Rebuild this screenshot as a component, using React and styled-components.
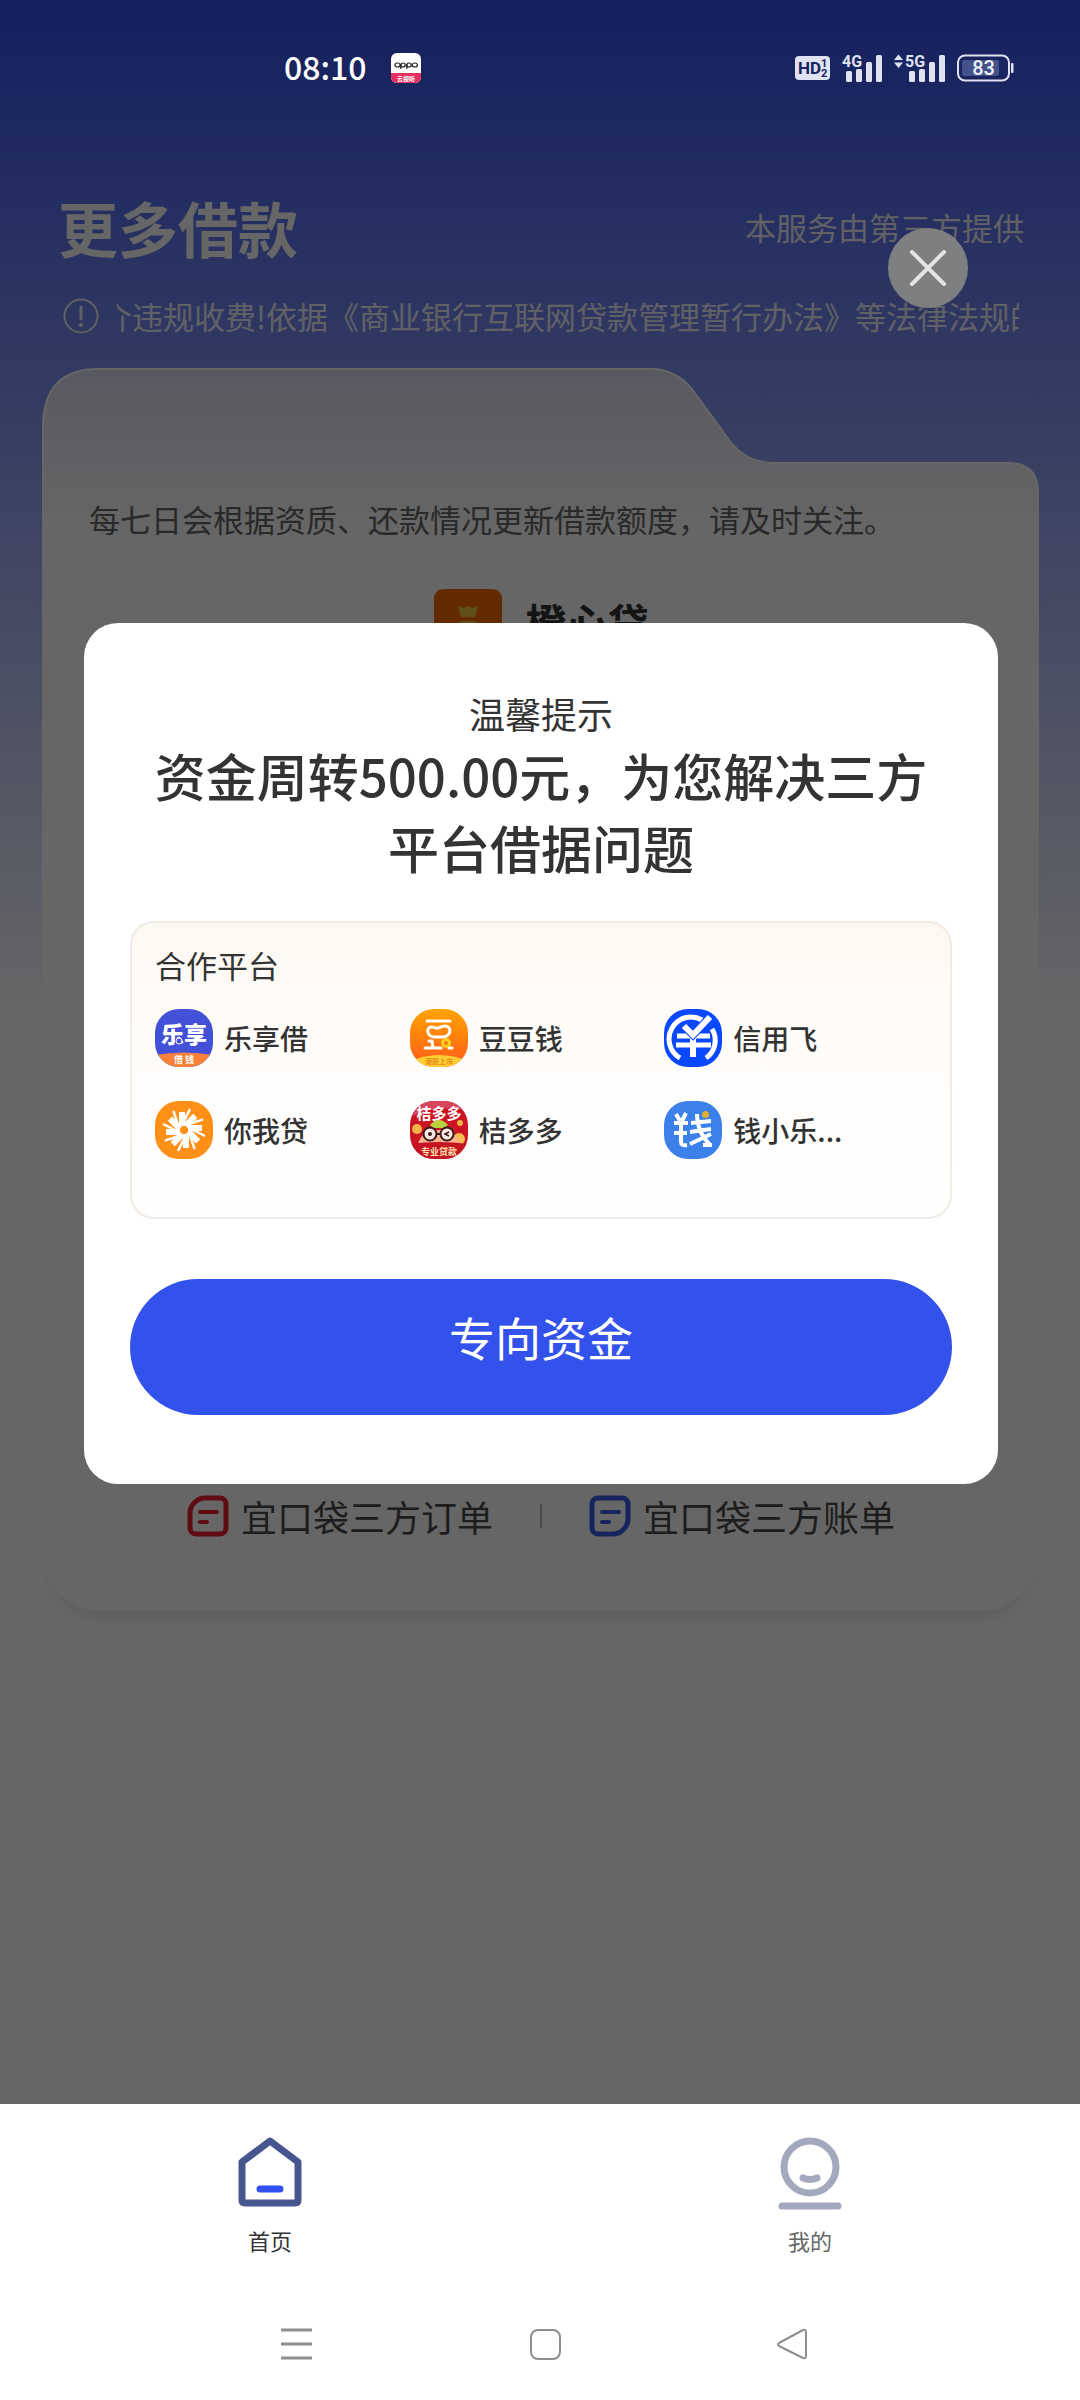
import React from 'react';
import styled, { createGlobalStyle } from 'styled-components';

const GlobalStyle = createGlobalStyle`
  * {
    box-sizing: border-box;
  }

  body {
    margin: 0;
    background: #fff;
    color: #333;
    font-family: 'Noto Sans CJK SC', 'Noto Sans', sans-serif;
  }

  h1, h2, h3, p, ul {
    margin: 0;
    padding: 0;
  }

  button {
    border: 0;
    padding: 0;
    background: none;
    color: inherit;
    font-family: inherit;
    cursor: pointer;
  }

  a {
    color: inherit;
    text-decoration: none;
  }

  svg {
    display: block;
    flex-shrink: 0;
    overflow: visible;
  }
`;

const Screen = styled.div`
  position: relative;
  display: flex;
  flex-direction: column;
  min-height: 100vh;
`;

const Page = styled.main`
  flex: 1;
  padding: 136px 41px 0 42px;
  background: linear-gradient(to bottom, #3250ee 0, #fff 1010px);
`;

const StatusBar = styled.header`
  position: absolute;
  z-index: 3;
  top: 0;
  left: 0;
  right: 0;
  display: flex;
  align-items: center;
  justify-content: space-between;
  height: 136px;
  padding: 0 66px 0 284px;
  color: #fff;
`;

const StatusGroup = styled.div`
  display: flex;
  align-items: center;
  gap: ${(props) => props.$gap}px;
`;

const Clock = styled.time`
  padding-bottom: 4px;
  font-size: 32px;
  font-weight: 500;
  line-height: 40px;
`;

const TitleRow = styled.div`
  display: flex;
  align-items: center;
  justify-content: space-between;
  height: 142px;
  padding: 40px 15px 0 16px;
`;

const PageTitle = styled.h1`
  color: #fff;
  font-size: 60px;
  font-weight: 700;
  line-height: 72px;
`;

const Provider = styled.p`
  color: #fff;
  opacity: 0.9;
  font-size: 31px;
  line-height: 40px;
`;

const Notice = styled.div`
  display: flex;
  align-items: center;
  gap: 18px;
  height: 56px;
  padding: 19px 20px 0 21px;
  margin-bottom: 34px;
  border-radius: 12px;
  color: #fff;
`;

const NoticeText = styled.p`
  flex: 1;
  min-width: 0;
  overflow: hidden;
  opacity: 0.9;
  font-size: 31px;
  line-height: 40px;
  text-indent: -16px;
  white-space: nowrap;
`;

const Card = styled.section`
  position: relative;
  display: flex;
  flex-direction: column;
  min-height: 1243px;
  border-radius: 60px 0 60px 60px;
  box-shadow: 0 16px 16px -10px rgba(0, 0, 0, 0.1);
`;

const CardShape = styled.svg`
  position: absolute;
  top: 0;
  left: 0;
  width: 100%;
  height: 160px;
`;

const CardBody = styled.div`
  position: relative;
  flex: 1;
  display: flex;
  flex-direction: column;
  justify-content: space-between;
  margin-top: 131px;
  padding: 0 46px 74px 47px;
  border-radius: 0 0 60px 60px;
  background: linear-gradient(to bottom, transparent 28px, #fff 28px);
`;

const CardHint = styled.p`
  color: #666;
  font-size: 31px;
  line-height: 40px;
`;

const Product = styled.div`
  display: flex;
  align-items: center;
  justify-content: center;
  gap: 24px;
  margin-top: 50px;
`;

const ProductName = styled.h2`
  padding-bottom: 4px;
  font-size: 41px;
  font-weight: 700;
  line-height: 60px;
`;

const Links = styled.nav`
  display: flex;
  align-items: center;
  justify-content: center;
`;

const CardLink = styled.a`
  display: flex;
  align-items: center;
  gap: 12px;
  color: #4a4a4a;
  font-size: 36px;
  line-height: 40px;
`;

const Divider = styled.i`
  width: 2px;
  height: 24px;
  margin: 0 47px;
  background: #bbb;
`;

const Overlay = styled.div`
  position: absolute;
  z-index: 2;
  top: 0;
  left: 0;
  right: 0;
  bottom: 296px;
  padding: 228px 82px 0 84px;
  background: rgba(0, 0, 0, 0.6);
`;

const CloseButton = styled.button`
  display: flex;
  align-items: center;
  justify-content: center;
  width: 80px;
  height: 80px;
  margin: 0 30px 315px auto;
  border-radius: 50%;
  background: #7e7f80;
`;

const Dialog = styled.section`
  padding: 70px 46px 69px;
  border-radius: 34px;
  background: #fff;
`;

const DialogHint = styled.p`
  margin-bottom: 6px;
  font-size: 36px;
  line-height: 40px;
  text-align: center;
`;

const DialogTitle = styled.h2`
  padding: 0 20px;
  margin-bottom: 38px;
  font-size: 51px;
  font-weight: 500;
  line-height: 72px;
  text-align: center;
`;

const Partners = styled.div`
  min-height: 298px;
  padding: 22px 31px 22px 23px;
  margin-bottom: 60px;
  border: 2px solid #f1ebe6;
  border-radius: 24px;
  background: linear-gradient(to bottom, #fef8f2, #fffdfb 50%, #fff);
`;

const PartnersTitle = styled.h3`
  margin-bottom: 24px;
  font-size: 31px;
  font-weight: 400;
  line-height: 40px;
`;

const PartnerList = styled.ul`
  display: grid;
  grid-template-columns: repeat(3, 1fr);
  row-gap: 34px;
  list-style: none;
`;

const Partner = styled.li`
  display: flex;
  align-items: center;
  gap: 11px;
  font-size: 28px;
  font-weight: 500;
  line-height: 40px;
`;

const SubmitButton = styled.button`
  display: block;
  width: 100%;
  height: 136px;
  padding-bottom: 22px;
  border-radius: 68px;
  background: #3351eb;
  color: #fff;
  font-size: 46px;
  line-height: 60px;
`;

const TabBar = styled.nav`
  display: grid;
  grid-template-columns: 1fr 1fr;
  height: 184px;
  padding-top: 32px;
  background: #fff;
`;

const Tab = styled.a`
  display: flex;
  flex-direction: column;
  align-items: center;
  gap: 12px;
  color: ${(props) => (props.$active ? '#333' : '#666')};
  font-size: 22px;
  line-height: 32px;
`;

const SystemBar = styled.footer`
  display: flex;
  justify-content: space-between;
  height: 112px;
  padding: 38px 270px 0 278px;
  background: #fff;
`;

const SystemButton = styled.button`
  width: 36px;
  height: 36px;
`;

const svgFont = "'Noto Sans CJK SC', sans-serif";
const statusFont = "'Roboto', sans-serif";

const BrandIcon = () => (
  <svg width="30" height="30" viewBox="0 0 30 30">
    <defs>
      <clipPath id="brand">
        <rect width="30" height="30" rx="6" />
      </clipPath>
    </defs>
    <g clipPath="url(#brand)">
      <rect width="30" height="30" fill="#fff" />
      <rect y="20" width="30" height="10" fill="#e4305f" />
      <g fill="none" stroke="#222" strokeWidth="1.2">
        <ellipse cx="6.5" cy="12" rx="2.6" ry="2" />
        <ellipse cx="12" cy="12" rx="2.2" ry="2" />
        <ellipse cx="18" cy="12" rx="2.2" ry="2" />
        <ellipse cx="23.8" cy="12" rx="2.6" ry="2" />
        <path d="M9.8 11v5M15.8 11v5" />
      </g>
      <text x="15" y="27.5" fontSize="6" fontWeight="700" fill="#fff" textAnchor="middle" fontFamily={svgFont}>
        云视听
      </text>
    </g>
  </svg>
);

const HdIcon = () => (
  <svg width="35" height="26" viewBox="0 0 35 26" fill="#17225f" fontFamily={statusFont} fontWeight="700">
    <rect y="1" width="35" height="24" rx="4" fill="#dfe2f0" />
    <text x="3" y="19" fontSize="17">
      HD
    </text>
    <text x="26" y="12" fontSize="11">
      1
    </text>
    <text x="26" y="22" fontSize="11">
      2
    </text>
  </svg>
);

const SignalIcon = ({ label, arrows }) => (
  <svg width={arrows ? 51 : 40} height="30" viewBox={arrows ? '-11 0 51 30' : '0 0 40 30'} fill="#dfe2f0">
    {arrows && <path d="M-11 7l4.5-5.5L-2 7zM-11 9.5l4.5 5.5L-2 9.5z" />}
    <text x="0" y="14" fontSize="16" fontWeight="700" fontFamily={statusFont}>
      {label}
    </text>
    <rect x="4" y="18" width="6" height="11" rx="1.5" />
    <rect x="14" y="16" width="6" height="13" rx="1.5" />
    <rect x="24" y="9" width="6" height="20" rx="1.5" />
    <rect x="34" y="2" width="6" height="27" rx="1.5" />
  </svg>
);

const BatteryIcon = () => (
  <svg width="57" height="28" viewBox="0 0 57 28">
    <rect x="1" y="1.5" width="51" height="25" rx="7" fill="none" stroke="#dfe2f0" strokeWidth="2" />
    <rect x="5" y="6" width="37" height="16" rx="2" fill="#44528c" />
    <rect x="54" y="9" width="2.5" height="10" rx="1" fill="#dfe2f0" />
    <text x="26.5" y="21" fontSize="20" fontWeight="500" fill="#eef0f8" textAnchor="middle" fontFamily={statusFont}>
      83
    </text>
  </svg>
);

const WarnIcon = () => (
  <svg width="36" height="36" viewBox="0 0 36 36" fill="none" stroke="#fff" opacity="0.9">
    <circle cx="18" cy="18" r="16.5" strokeWidth="2" />
    <path d="M18 9v12" strokeWidth="3" strokeLinecap="round" />
    <circle cx="18" cy="27" r="1" strokeWidth="2" />
  </svg>
);

const MoneyBagIcon = () => (
  <svg width="68" height="68" viewBox="0 0 68 68">
    <rect width="68" height="68" rx="9" fill="#fa6a00" />
    <path d="M24 17l6 2 4-2 4 2 6-2-3 11H27zM27 32h14c8 5 12 11 9 20-2 7-8 8-16 8s-14-1-16-8c-3-9 1-15 9-20z" fill="#efc540" />
    <path d="M34 54l-8-8c-2-5 5-7 8-3 3-4 10-2 8 3z" fill="#fa6a00" />
  </svg>
);

const OrderIcon = ({ color, flip }) => (
  <svg width="42" height="42" viewBox="0 0 42 42" fill="none" stroke={color} strokeWidth="5" strokeLinejoin="round">
    <path
      d={
        flip
          ? 'M9 3h24a6 6 0 0 1 6 6v15c0 8-7 15-15 15H9a6 6 0 0 1-6-6V9a6 6 0 0 1 6-6z'
          : 'M18 3h15a6 6 0 0 1 6 6v24a6 6 0 0 1-6 6H9a6 6 0 0 1-6-6V18C3 10 10 3 18 3z'
      }
    />
    <path d="M13 17h17M13 27h7" strokeWidth="4" strokeLinecap="round" />
  </svg>
);

const CloseIcon = () => (
  <svg width="40" height="40" viewBox="0 0 40 40" stroke="#e4e4e6" strokeWidth="4" strokeLinecap="round">
    <path d="M4 4l32 32M36 4L4 36" />
  </svg>
);

const Logo = ({ id, children }) => (
  <svg width="58" height="58" viewBox="0 0 58 58" fontFamily={svgFont}>
    <defs>
      <clipPath id={id}>
        <rect width="58" height="58" rx="24" />
      </clipPath>
      <linearGradient id={`${id}-fill`} x2="0" y2="1">
        <stop stopColor="#ffa400" />
        <stop offset="1" stopColor="#ff5a1a" />
      </linearGradient>
    </defs>
    <g clipPath={`url(#${id})`}>{children}</g>
  </svg>
);

const LexiangLogo = () => (
  <Logo id="lexiang">
    <rect width="58" height="58" fill="#4350d8" />
    <text x="29" y="34" fontSize="23" fontWeight="900" fill="#fff" textAnchor="middle">
      乐享
    </text>
    <circle cx="24" cy="32" r="3" fill="#4350d8" stroke="#fff" />
    <path d="M0 46q29-5 58 0v12H0z" fill="#f9813a" />
    <text x="29" y="54" fontSize="9" fontWeight="700" fill="#fff" textAnchor="middle">
      借 钱
    </text>
  </Logo>
);

const DoudouLogo = () => (
  <Logo id="doudou">
    <rect width="58" height="58" fill="url(#doudou-fill)" />
    <g fill="none" stroke="#fff" strokeWidth="3" strokeLinecap="round" strokeLinejoin="round">
      <path d="M17 12h23M15 39h16M19 32h3l1 7M39 39h3" />
      <path d="M22 18c-7 0-5 10 3 10h7c10 0 10-11 3-11-5 0-6 3-9 2-1 0-2-1-4-1z" />
    </g>
    <circle cx="36" cy="34" r="3.5" fill="none" stroke="#ffd21f" strokeWidth="3" />
    <path d="M0 52q29-12 58 0v6H0z" fill="#ffce35" />
    <text x="29" y="55" fontSize="7" fontWeight="700" fill="#e58a16" textAnchor="middle">
      港股上市
    </text>
  </Logo>
);

const XinyongLogo = () => (
  <Logo id="xinyong">
    <rect width="58" height="58" fill="#0a48ff" />
    <g fill="none" stroke="#fff">
      <path d="M16 49A21.5 21.5 0 1 1 38 11" strokeWidth="5" />
      <path d="M48 20A21.5 21.5 0 0 1 42 49" strokeWidth="5" />
      <path d="M13 27h33M12 36h35" strokeWidth="5" />
      <path d="M29 28v20" strokeWidth="6" />
      <path d="M20 17l9 9L46 8" stroke="#0a48ff" strokeWidth="8" />
      <path d="M20 17l9 9L46 8" strokeWidth="6" />
    </g>
  </Logo>
);

const NiwoLogo = () => (
  <Logo id="niwo">
    <rect width="58" height="58" fill="#ff8f17" />
    {[0, 45, 90, 135, 180, 225, 270, 315].map((angle) => (
      <g key={angle} transform={`rotate(${angle} 29 29)`} stroke="#fff">
        <path d="M27 25V11" strokeWidth="6" />
        <path d="M29 20l6-12" strokeWidth="2.5" />
      </g>
    ))}
    <circle cx="29" cy="29" r="3" fill="#ff8f17" />
  </Logo>
);

const JuduoLogo = () => (
  <Logo id="juduo">
    <rect width="58" height="58" fill="#cb1524" />
    <path d="M0 0h58v10Q29 2 0 16z" fill="#d8455c" />
    <circle cx="7" cy="28" r="5" fill="#f3b548" />
    <circle cx="49" cy="38" r="6" fill="#f6bd52" />
    <circle cx="50" cy="22" r="3" fill="#f3b548" />
    <path d="M8 44c2-20 40-20 42 0z" fill="#ffb38d" />
    <path d="M20 24q9-10 18 0l-4 3H23z" fill="#b8d33c" />
    <text x="29" y="18" fontSize="15" fontWeight="700" fill="#fff" textAnchor="middle">
      桔多多
    </text>
    <g fill="#ffe9e0" stroke="#3a1b20" strokeWidth="2">
      <circle cx="20" cy="33" r="6.5" />
      <circle cx="37" cy="33" r="6.5" />
      <path d="M26 33h5" />
    </g>
    <circle cx="20" cy="33" r="2" fill="#3a1b20" />
    <path d="M39 31l-4 2 4 2" fill="none" stroke="#3a1b20" strokeWidth="1.5" />
    <path d="M0 43q29-4 58 0v15H0z" fill="#c51422" />
    <text x="29" y="54" fontSize="9" fontWeight="700" fill="#ffe0b0" textAnchor="middle">
      专业贷款
    </text>
  </Logo>
);

const QianLogo = () => (
  <Logo id="qian">
    <rect width="58" height="58" fill="#3c80ea" />
    <g fill="none" stroke="#fff" strokeWidth="4">
      <path d="M12 13l4 7M22 12l-4 8M10 22h14M10 32h13M17 21v20q0 4 6 3" />
      <path d="M27 22l20-2M26 31l21-3M33 13q0 18 13 31M47 33L26 43M39 44h9" />
    </g>
    <circle cx="41.5" cy="13.5" r="3.5" fill="#e0b02c" />
  </Logo>
);

const HomeIcon = () => (
  <svg width="72" height="76" viewBox="0 0 72 76" fill="none" strokeLinejoin="round" strokeLinecap="round">
    <path d="M36 5L8 26v38q0 3 3 3h50q3 0 3-3V26z" stroke="#48568f" strokeWidth="7" />
    <path d="M26 53h20" stroke="#3351f0" strokeWidth="7" />
  </svg>
);

const MineIcon = () => (
  <svg width="72" height="76" viewBox="0 0 72 76" fill="none" stroke="#a3a8bd" strokeWidth="7" strokeLinecap="round">
    <circle cx="36" cy="31" r="26" />
    <path d="M29 42q7 3 14 0" />
    <path d="M8 70h56" />
  </svg>
);

const partners = [
  { name: '乐享借', Icon: LexiangLogo },
  { name: '豆豆钱', Icon: DoudouLogo },
  { name: '信用飞', Icon: XinyongLogo },
  { name: '你我贷', Icon: NiwoLogo },
  { name: '桔多多', Icon: JuduoLogo },
  { name: '钱小乐...', Icon: QianLogo },
];

const App = () => (
  <>
    <GlobalStyle />
    <Screen>
      <StatusBar>
        <StatusGroup $gap={24}>
          <Clock>08:10</Clock>
          <BrandIcon />
        </StatusGroup>
        <StatusGroup $gap={12}>
          <HdIcon />
          <SignalIcon label="4G" />
          <SignalIcon label="5G" arrows />
          <BatteryIcon />
        </StatusGroup>
      </StatusBar>
      <Page>
        <TitleRow>
          <PageTitle>更多借款</PageTitle>
          <Provider>本服务由第三方提供</Provider>
        </TitleRow>
        <Notice>
          <WarnIcon />
          <NoticeText>介违规收费!依据《商业银行互联网贷款管理暂行办法》等法律法规的</NoticeText>
        </Notice>
        <Card>
          <CardShape viewBox="0 0 998 160" preserveAspectRatio="none">
            <defs>
              <linearGradient id="tab" x2="0" y2="1">
                <stop stopColor="#dde0f2" />
                <stop offset="1" stopColor="#fff" />
              </linearGradient>
            </defs>
            <path
              d="M1 160V56Q3 1 56 1H612Q636 2 652 23L690 75Q706 95 734 95H970Q997 97 997 124V160"
              fill="url(#tab)"
              stroke="#fff"
              strokeWidth="2"
            />
          </CardShape>
          <CardBody>
            <div>
              <CardHint>每七日会根据资质、还款情况更新借款额度，请及时关注。</CardHint>
              <Product>
                <MoneyBagIcon />
                <ProductName>橙心贷</ProductName>
              </Product>
            </div>
            <Links>
              <CardLink href="#orders">
                <OrderIcon color="#e8202e" />
                宜口袋三方订单
              </CardLink>
              <Divider />
              <CardLink href="#bills">
                <OrderIcon color="#3d5bea" flip />
                宜口袋三方账单
              </CardLink>
            </Links>
          </CardBody>
        </Card>
      </Page>
      <Overlay>
        <CloseButton aria-label="关闭">
          <CloseIcon />
        </CloseButton>
        <Dialog role="dialog" aria-labelledby="dialog-title">
          <DialogHint>温馨提示</DialogHint>
          <DialogTitle id="dialog-title">资金周转500.00元，为您解决三方平台借据问题</DialogTitle>
          <Partners>
            <PartnersTitle>合作平台</PartnersTitle>
            <PartnerList>
              {partners.map(({ name, Icon }) => (
                <Partner key={name}>
                  <Icon />
                  {name}
                </Partner>
              ))}
            </PartnerList>
          </Partners>
          <SubmitButton>专向资金</SubmitButton>
        </Dialog>
      </Overlay>
      <TabBar>
        <Tab href="#home" $active>
          <HomeIcon />
          首页
        </Tab>
        <Tab href="#mine">
          <MineIcon />
          我的
        </Tab>
      </TabBar>
      <SystemBar>
        <SystemButton aria-label="菜单">
          <svg width="36" height="36" viewBox="0 0 36 36" stroke="#8e8e8e" strokeWidth="3">
            <path d="M3 4h31M3 18h31M3 32h31" />
          </svg>
        </SystemButton>
        <SystemButton aria-label="主屏幕">
          <svg width="36" height="36" viewBox="0 0 36 36" fill="none" stroke="#8e8e8e" strokeWidth="2">
            <rect x="5" y="4" width="29" height="29" rx="7" />
          </svg>
        </SystemButton>
        <SystemButton aria-label="返回">
          <svg width="36" height="36" viewBox="0 0 36 36" fill="none" stroke="#8e8e8e" strokeWidth="2" strokeLinejoin="round">
            <path d="M5 17L29 4q3-1 3 2v24q0 3-3 2L5 20q-2-1.5 0-3z" />
          </svg>
        </SystemButton>
      </SystemBar>
    </Screen>
  </>
);

export default App;
